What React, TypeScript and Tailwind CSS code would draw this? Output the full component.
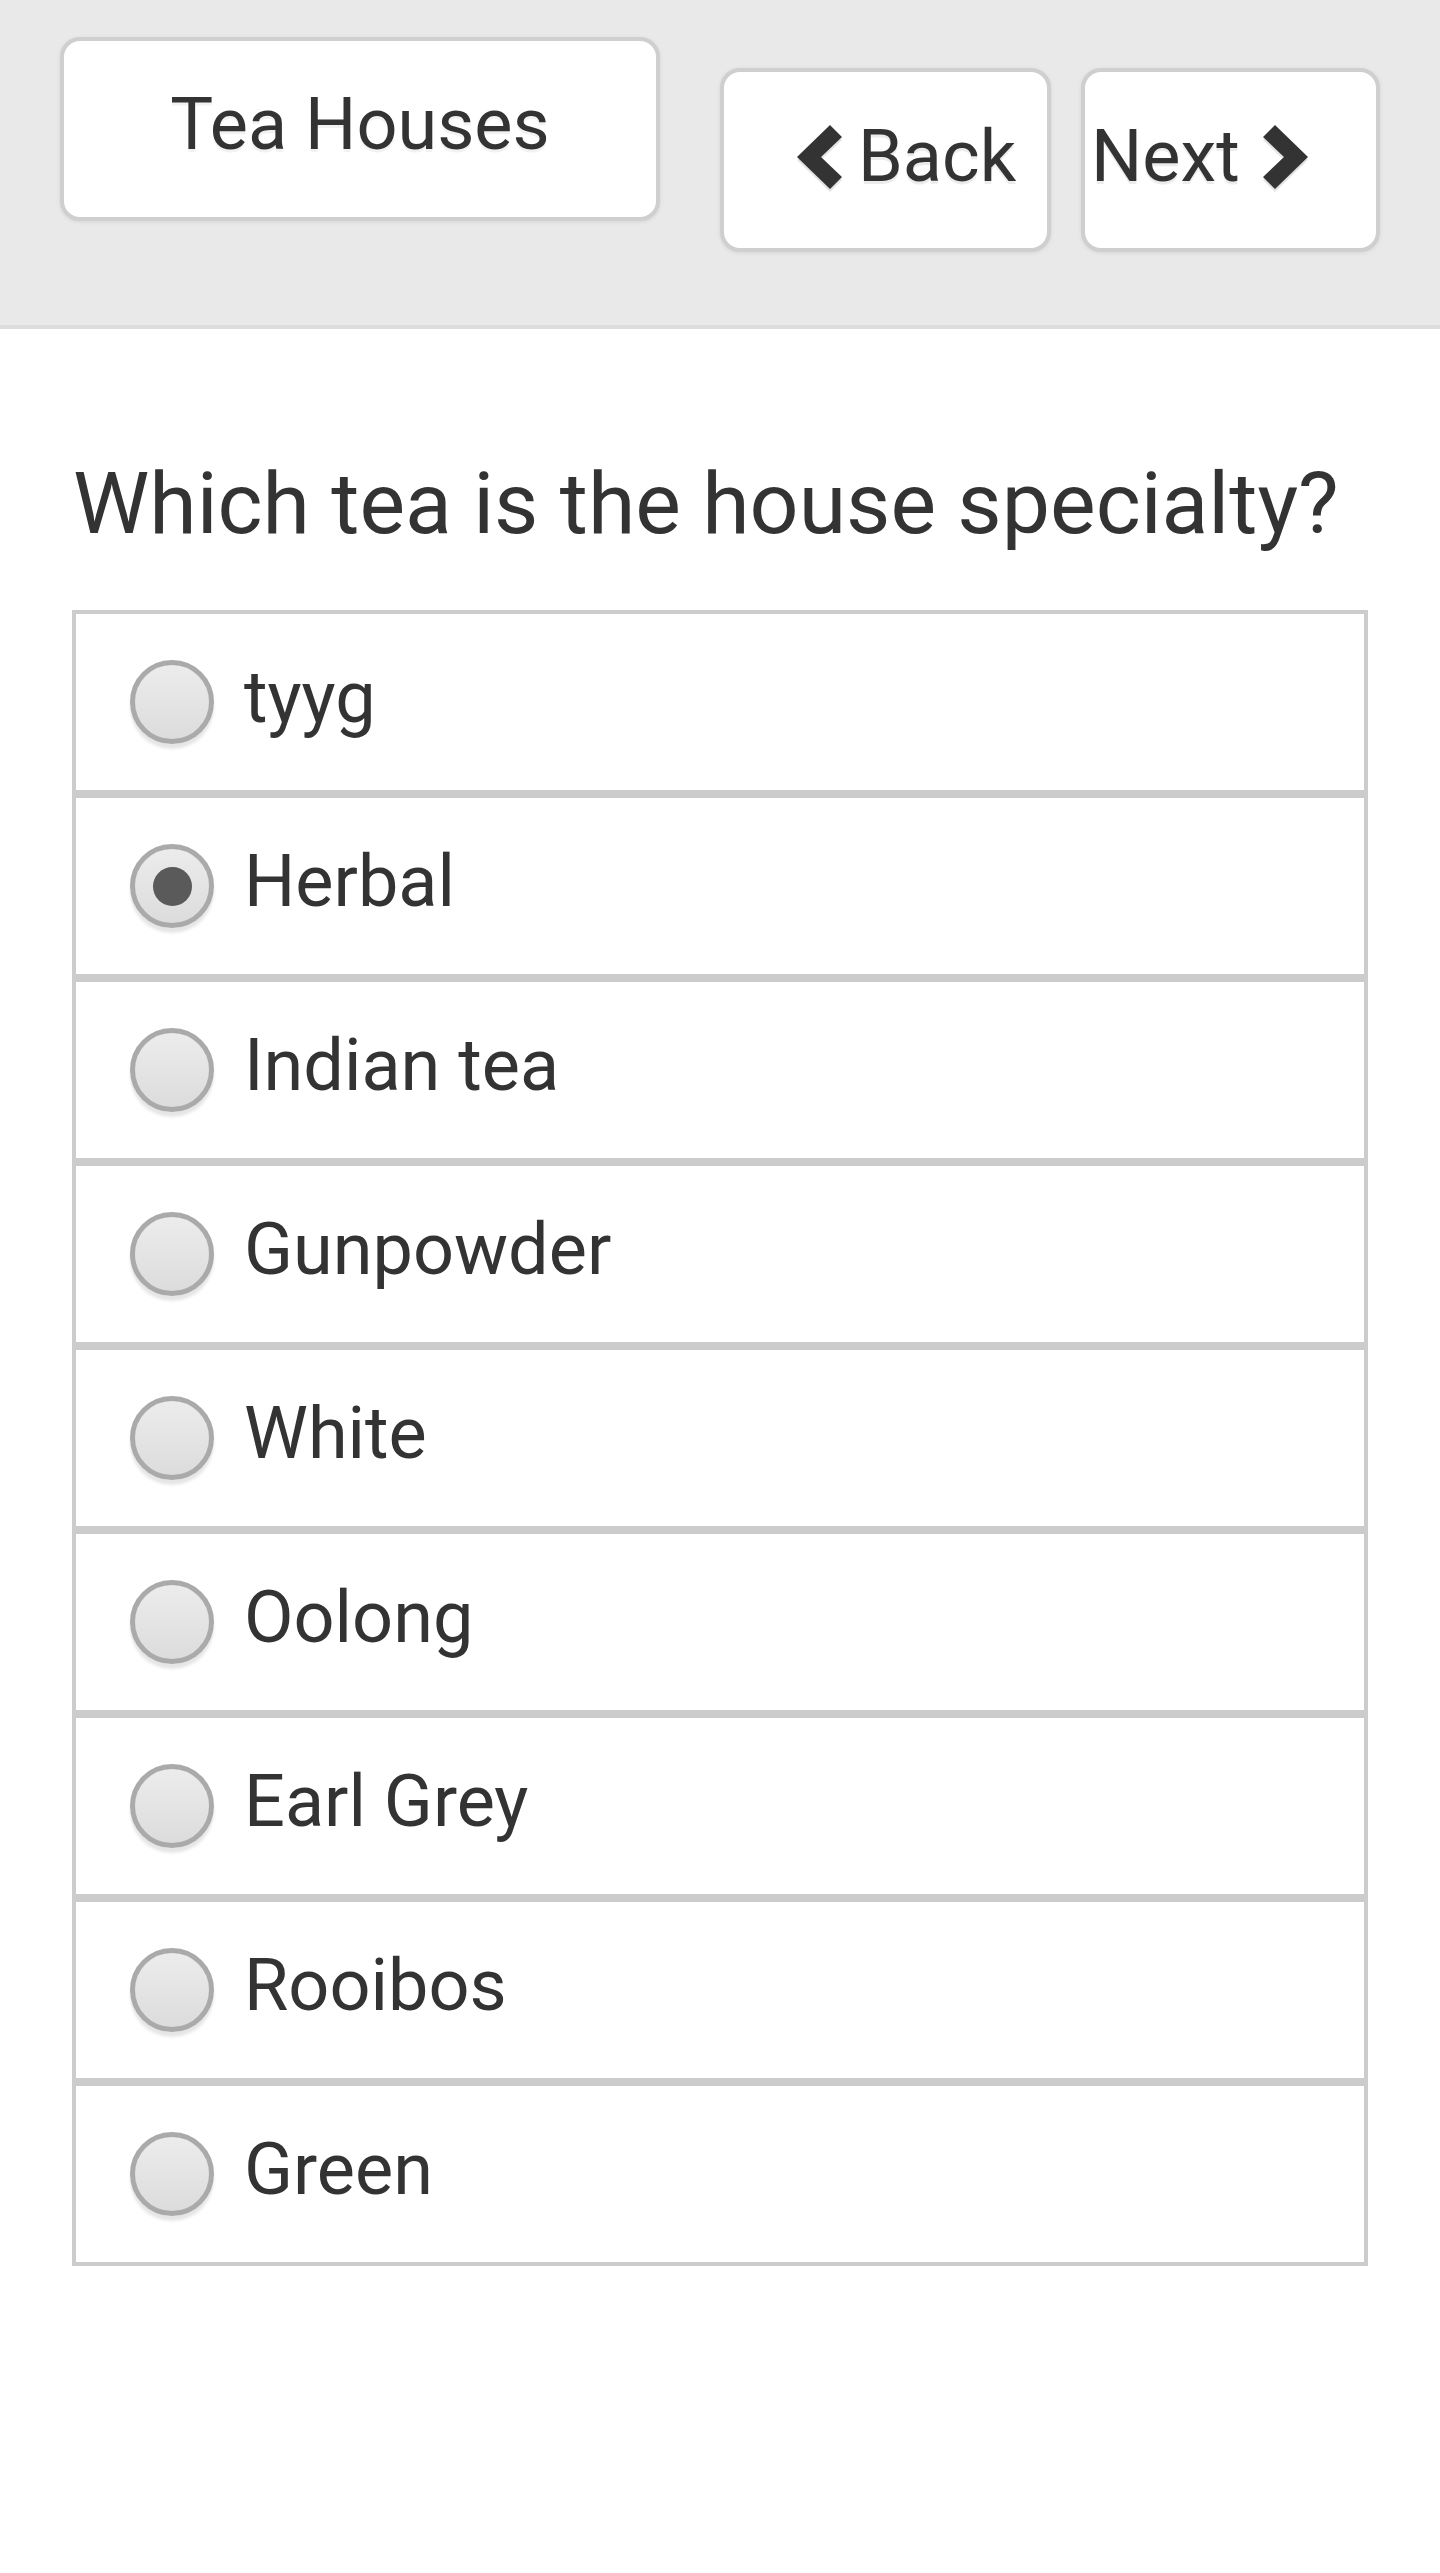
const OPTIONS = [
  "tyyg",
  "Herbal",
  "Indian tea",
  "Gunpowder",
  "White",
  "Oolong",
  "Earl Grey",
  "Rooibos",
  "Green",
];

const SELECTED = "Herbal";

function ChevronLeft() {
  return (
    <svg
      width="48"
      height="66"
      viewBox="0 0 48 66"
      className="shrink-0 [filter:drop-shadow(0_3px_0_#e4e4e4)]"
    >
      <polygon points="2,33 35,1 47,13 26,33 47,53 35,65" fill="#333333" />
    </svg>
  );
}

function ChevronRight() {
  return (
    <svg
      width="48"
      height="66"
      viewBox="0 0 48 66"
      className="shrink-0 [filter:drop-shadow(0_3px_0_#e4e4e4)]"
    >
      <polygon points="46,33 13,1 1,13 22,33 1,53 13,65" fill="#333333" />
    </svg>
  );
}

function Radio({ checked }: { checked: boolean }) {
  return (
    <span className="flex h-[84px] w-[84px] shrink-0 items-center justify-center rounded-full border-[5px] border-[#aaaaaa] bg-gradient-to-b from-[#ececec] to-[#dcdcdc] shadow-[0_5px_3px_rgba(0,0,0,0.10)]">
      {checked && (
        <span className="h-[39px] w-[39px] rounded-full bg-[#5a5a5a]" />
      )}
    </span>
  );
}

export default function App() {
  return (
    <div className="min-h-[2573px] bg-white font-['Roboto','Liberation_Sans',sans-serif] text-[#333333]">
      {/* Top bar */}
      <header className="flex h-[329px] items-start border-b-4 border-[#dddddd] bg-[#e9e9e9] px-[60px] pt-[37px]">
        <button className="flex h-[184px] w-[600px] items-center justify-center rounded-[20px] border-4 border-[#cfcfcf] bg-white pb-[9px] text-[72px] shadow-[0_1px_4px_rgba(0,0,0,0.08)] [text-shadow:0_3px_0_#f2f2f2]">
          Tea Houses
        </button>

        <button className="ml-[60px] mt-[31px] flex h-[184px] w-[331px] items-center gap-[15px] rounded-[20px] border-4 border-[#cfcfcf] bg-white pb-[6px] pl-[71px] text-[72px] shadow-[0_1px_4px_rgba(0,0,0,0.08)] [text-shadow:0_3px_0_#ececec]">
          <ChevronLeft />
          <span>Back</span>
        </button>

        <button className="ml-[30px] mt-[31px] flex h-[184px] w-[299px] items-center gap-[22px] rounded-[20px] border-4 border-[#cfcfcf] bg-white pb-[6px] pl-[6px] text-[72px] shadow-[0_1px_4px_rgba(0,0,0,0.08)] [text-shadow:0_3px_0_#ececec]">
          <span>Next</span>
          <ChevronRight />
        </button>
      </header>

      <main className="px-[72px]">
        <h1 className="mb-[56px] mt-[124px] pl-[1px] text-[86px] font-normal [line-height:normal]">
          Which tea is the house specialty?
        </h1>

        <ul className="flex flex-col">
          {OPTIONS.map((opt) => (
            <li
              key={opt}
              className="flex h-[184px] items-center gap-[30px] border-4 border-[#cccccc] bg-white pl-[54px]"
            >
              <Radio checked={opt === SELECTED} />
              <span className="pb-[9px] text-[72px]">{opt}</span>
            </li>
          ))}
        </ul>
      </main>
    </div>
  );
}
